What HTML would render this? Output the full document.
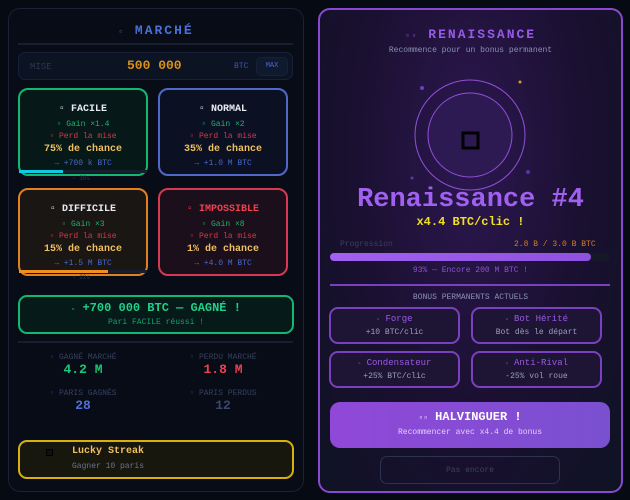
<!DOCTYPE html>
<html><head><meta charset="utf-8"><style>
*{margin:0;padding:0;box-sizing:border-box}
body{width:630px;height:500px;background:#060a12;font-family:"Liberation Mono",monospace;position:relative;overflow:hidden}
.a{position:absolute}
.c{text-align:center}
.lp{left:8px;top:8px;width:296px;height:484px;border:1px solid #1a2236;border-radius:12px;background:#070c17}
.card{position:absolute;width:130px;height:88px;border:2px solid;border-radius:10px;text-align:center;font-size:8px}
.card .t{margin-top:14px;font-size:10px;font-weight:bold;color:#e8ecf5}
.card .g{color:#20b070;margin-top:5px}
.card .p{color:#d03a4a;margin-top:3px}
.card .ch{color:#f0c060;font-size:10px;font-weight:bold;margin-top:3px}
.card .b{color:#4a68c8;margin-top:4px}
.rp{left:318px;top:8px;width:305px;height:485px;border:2px solid #8a48d0;border-radius:12px;background:radial-gradient(ellipse at 50% 30%,#2c1750 0%,#1a1030 55%,#0f1224 100%)}
.bc{position:absolute;width:131px;height:37px;border:2px solid #7a40c0;border-radius:9px;text-align:center;background:#1e1434}
.bc .t{color:#9a58e8;font-size:9px;margin-top:5px}
.bc .s{color:#9aa0b8;font-size:8px;margin-top:4px}
</style></head><body>
<div class="a lp"></div>
<div class="a c" style="left:8px;width:296px;top:23px;font-size:13px;font-weight:bold;color:#4a6fd8;letter-spacing:2px"><span style="font-size:8px">▫</span> MARCHÉ</div>
<div class="a" style="left:18px;top:43px;width:275px;height:2px;background:#161e30"></div>
<div class="a" style="left:18px;top:52px;width:275px;height:28px;border:1px solid #18203a;border-radius:7px;background:#0c1322"></div>
<div class="a" style="left:30px;top:62px;font-size:9px;color:#2c3650">MISE</div>
<div class="a" style="left:127px;top:58px;font-size:13px;font-weight:bold;color:#d8901c">500 000</div>
<div class="a" style="left:234px;top:62px;font-size:8px;color:#3a58a8">BTC</div>
<div class="a c" style="left:256px;top:57px;width:32px;height:19px;border:1px solid #18203a;border-radius:5px;background:#101a2e;font-size:7px;color:#4a68c8;line-height:17px">MAX</div>

<div class="card" style="left:18px;top:88px;border-color:#10b870;background:#071818"><div class="t">▫ FACILE</div><div class="g">▫ Gain ×1.4</div><div class="p">▫ Perd la mise</div><div class="ch">75% de chance</div><div class="b">→ +700 k BTC</div></div>
<div class="a" style="left:19px;top:170px;width:128px;height:3px;background:#161e30"></div>
<div class="a" style="left:19px;top:170px;width:44px;height:3px;background:#10c8e8"></div>
<div class="a" style="left:72px;top:175px;font-size:6px;color:#2c3650">▫ 38s</div>
<div class="card" style="left:158px;top:88px;border-color:#5068c8;background:#0b1122"><div class="t">▫ NORMAL</div><div class="g">▫ Gain ×2</div><div class="p">▫ Perd la mise</div><div class="ch">35% de chance</div><div class="b">→ +1.0 M BTC</div></div>
<div class="card" style="left:18px;top:188px;border-color:#e08020;background:#1a1614"><div class="t">▫ DIFFICILE</div><div class="g">▫ Gain ×3</div><div class="p">▫ Perd la mise</div><div class="ch">15% de chance</div><div class="b">→ +1.5 M BTC</div></div>
<div class="a" style="left:19px;top:270px;width:128px;height:3px;background:#161e30"></div>
<div class="a" style="left:19px;top:270px;width:89px;height:3px;background:#f09020"></div>
<div class="a" style="left:72px;top:274px;font-size:6px;color:#2c3650">▫ 22s</div>
<div class="card" style="left:158px;top:188px;border-color:#d83850;background:#1a0f1a"><div class="t" style="color:#f04050">▫ IMPOSSIBLE</div><div class="g">▫ Gain ×8</div><div class="p">▫ Perd la mise</div><div class="ch">1% de chance</div><div class="b">→ +4.0 M BTC</div></div>

<div class="a c" style="left:18px;top:295px;width:276px;height:39px;border:2px solid #10b870;border-radius:9px;background:#061a1a">
<div style="font-size:12px;font-weight:bold;color:#20d088;margin-top:4px"><span style="font-size:7px">▫</span> +700 000 BTC — GAGNÉ !</div>
<div style="font-size:8px;color:#18a068;margin-top:3px">Pari FACILE réussi !</div></div>
<div class="a" style="left:18px;top:341px;width:275px;height:2px;background:#161e30"></div>
<div class="a c" style="left:18px;top:353px;width:130px;font-size:8px;color:#34405c">▫ GAGNÉ MARCHÉ</div>
<div class="a c" style="left:18px;top:362px;width:130px;font-size:13px;font-weight:bold;color:#18c878">4.2 M</div>
<div class="a c" style="left:158px;top:353px;width:130px;font-size:8px;color:#34405c">▫ PERDU MARCHÉ</div>
<div class="a c" style="left:158px;top:362px;width:130px;font-size:13px;font-weight:bold;color:#f04050">1.8 M</div>
<div class="a c" style="left:18px;top:389px;width:130px;font-size:8px;color:#34405c">▫ PARIS GAGNÉS</div>
<div class="a c" style="left:18px;top:398px;width:130px;font-size:13px;font-weight:bold;color:#5070d8">28</div>
<div class="a c" style="left:158px;top:389px;width:130px;font-size:8px;color:#34405c">▫ PARIS PERDUS</div>
<div class="a c" style="left:158px;top:398px;width:130px;font-size:13px;font-weight:bold;color:#3a4868">12</div>
<div class="a" style="left:18px;top:440px;width:276px;height:39px;border:2px solid #d8b010;border-radius:9px;background:#18170e"></div>
<div class="a" style="left:46px;top:449px;width:7px;height:7px;border:1px solid #000;background:#111"></div>
<div class="a" style="left:72px;top:446px;font-size:10px;font-weight:bold;color:#f0c060">Lucky Streak</div>
<div class="a" style="left:72px;top:462px;font-size:8px;color:#6a7490">Gagner 10 paris</div>

<div class="a rp"></div>
<div class="a c" style="left:318px;width:305px;top:27px;font-size:13px;font-weight:bold;color:#9a58e8;letter-spacing:2px"><span style="font-size:8px">▫▫</span> RENAISSANCE</div>
<div class="a c" style="left:318px;width:305px;top:46px;font-size:8px;color:#8a90b8">Recommence pour un bonus permanent</div>
<svg class="a" style="left:318px;top:60px" width="305" height="140">
<circle cx="152" cy="75" r="55" fill="none" stroke="#9050d8" stroke-width="1"/>
<circle cx="152" cy="75" r="42" fill="#2e1a52" stroke="#9050d8" stroke-width="1"/>
<rect x="145" y="73" width="15" height="15" fill="none" stroke="#000" stroke-width="3"/>
<circle cx="104" cy="28" r="2" fill="#7040c0"/><circle cx="202" cy="22" r="1.5" fill="#d0a020"/>
<circle cx="210" cy="112" r="2" fill="#6030a8"/><circle cx="94" cy="118" r="1.5" fill="#5040a0"/>
</svg>
<div class="a c" style="left:318px;width:305px;top:185px;font-size:27px;font-weight:bold;color:#a060f0">Renaissance #4</div>
<div class="a c" style="left:318px;width:305px;top:215px;font-size:12px;font-weight:bold;color:#f0e020">x4.4 BTC/clic !</div>
<div class="a" style="left:340px;top:240px;font-size:8px;color:#3a4060">Progression</div>
<div class="a" style="left:514px;top:240px;font-size:8px;color:#d08020">2.8 B / 3.0 B BTC</div>
<div class="a" style="left:330px;top:253px;width:280px;height:8px;border-radius:4px;background:#141828"></div>
<div class="a" style="left:330px;top:253px;width:261px;height:8px;border-radius:4px;background:linear-gradient(90deg,#a060f0,#9050e0)"></div>
<div class="a c" style="left:318px;width:305px;top:266px;font-size:8px;color:#9050d8">93% — Encore 200 M BTC !</div>
<div class="a" style="left:330px;top:284px;width:280px;height:2px;background:#7a40c0"></div>
<div class="a c" style="left:318px;width:305px;top:293px;font-size:8px;color:#8a90b8">BONUS PERMANENTS ACTUELS</div>
<div class="bc" style="left:329px;top:307px"><div class="t"><span style="font-size:6px">▫</span> Forge</div><div class="s">+10 BTC/clic</div></div>
<div class="bc" style="left:471px;top:307px"><div class="t"><span style="font-size:6px">▫</span> Bot Hérité</div><div class="s">Bot dès le départ</div></div>
<div class="bc" style="left:329px;top:351px"><div class="t"><span style="font-size:6px">▫</span> Condensateur</div><div class="s">+25% BTC/clic</div></div>
<div class="bc" style="left:471px;top:351px"><div class="t"><span style="font-size:6px">▫</span> Anti-Rival</div><div class="s">-25% vol roue</div></div>
<div class="a c" style="left:330px;top:402px;width:280px;height:46px;border-radius:10px;background:linear-gradient(90deg,#9048d8,#7a50d0)">
<div style="font-size:12px;font-weight:bold;color:#fff;margin-top:8px"><span style="font-size:8px">▫▫</span> HALVINGUER !</div>
<div style="font-size:8px;color:#e0d0f8;margin-top:4px">Recommencer avec x4.4 de bonus</div></div>
<div class="a c" style="left:380px;top:456px;width:180px;height:28px;border:1px solid #2a3450;border-radius:7px;font-size:8px;color:#3a4460;line-height:27px">Pas encore</div>
</body></html>
